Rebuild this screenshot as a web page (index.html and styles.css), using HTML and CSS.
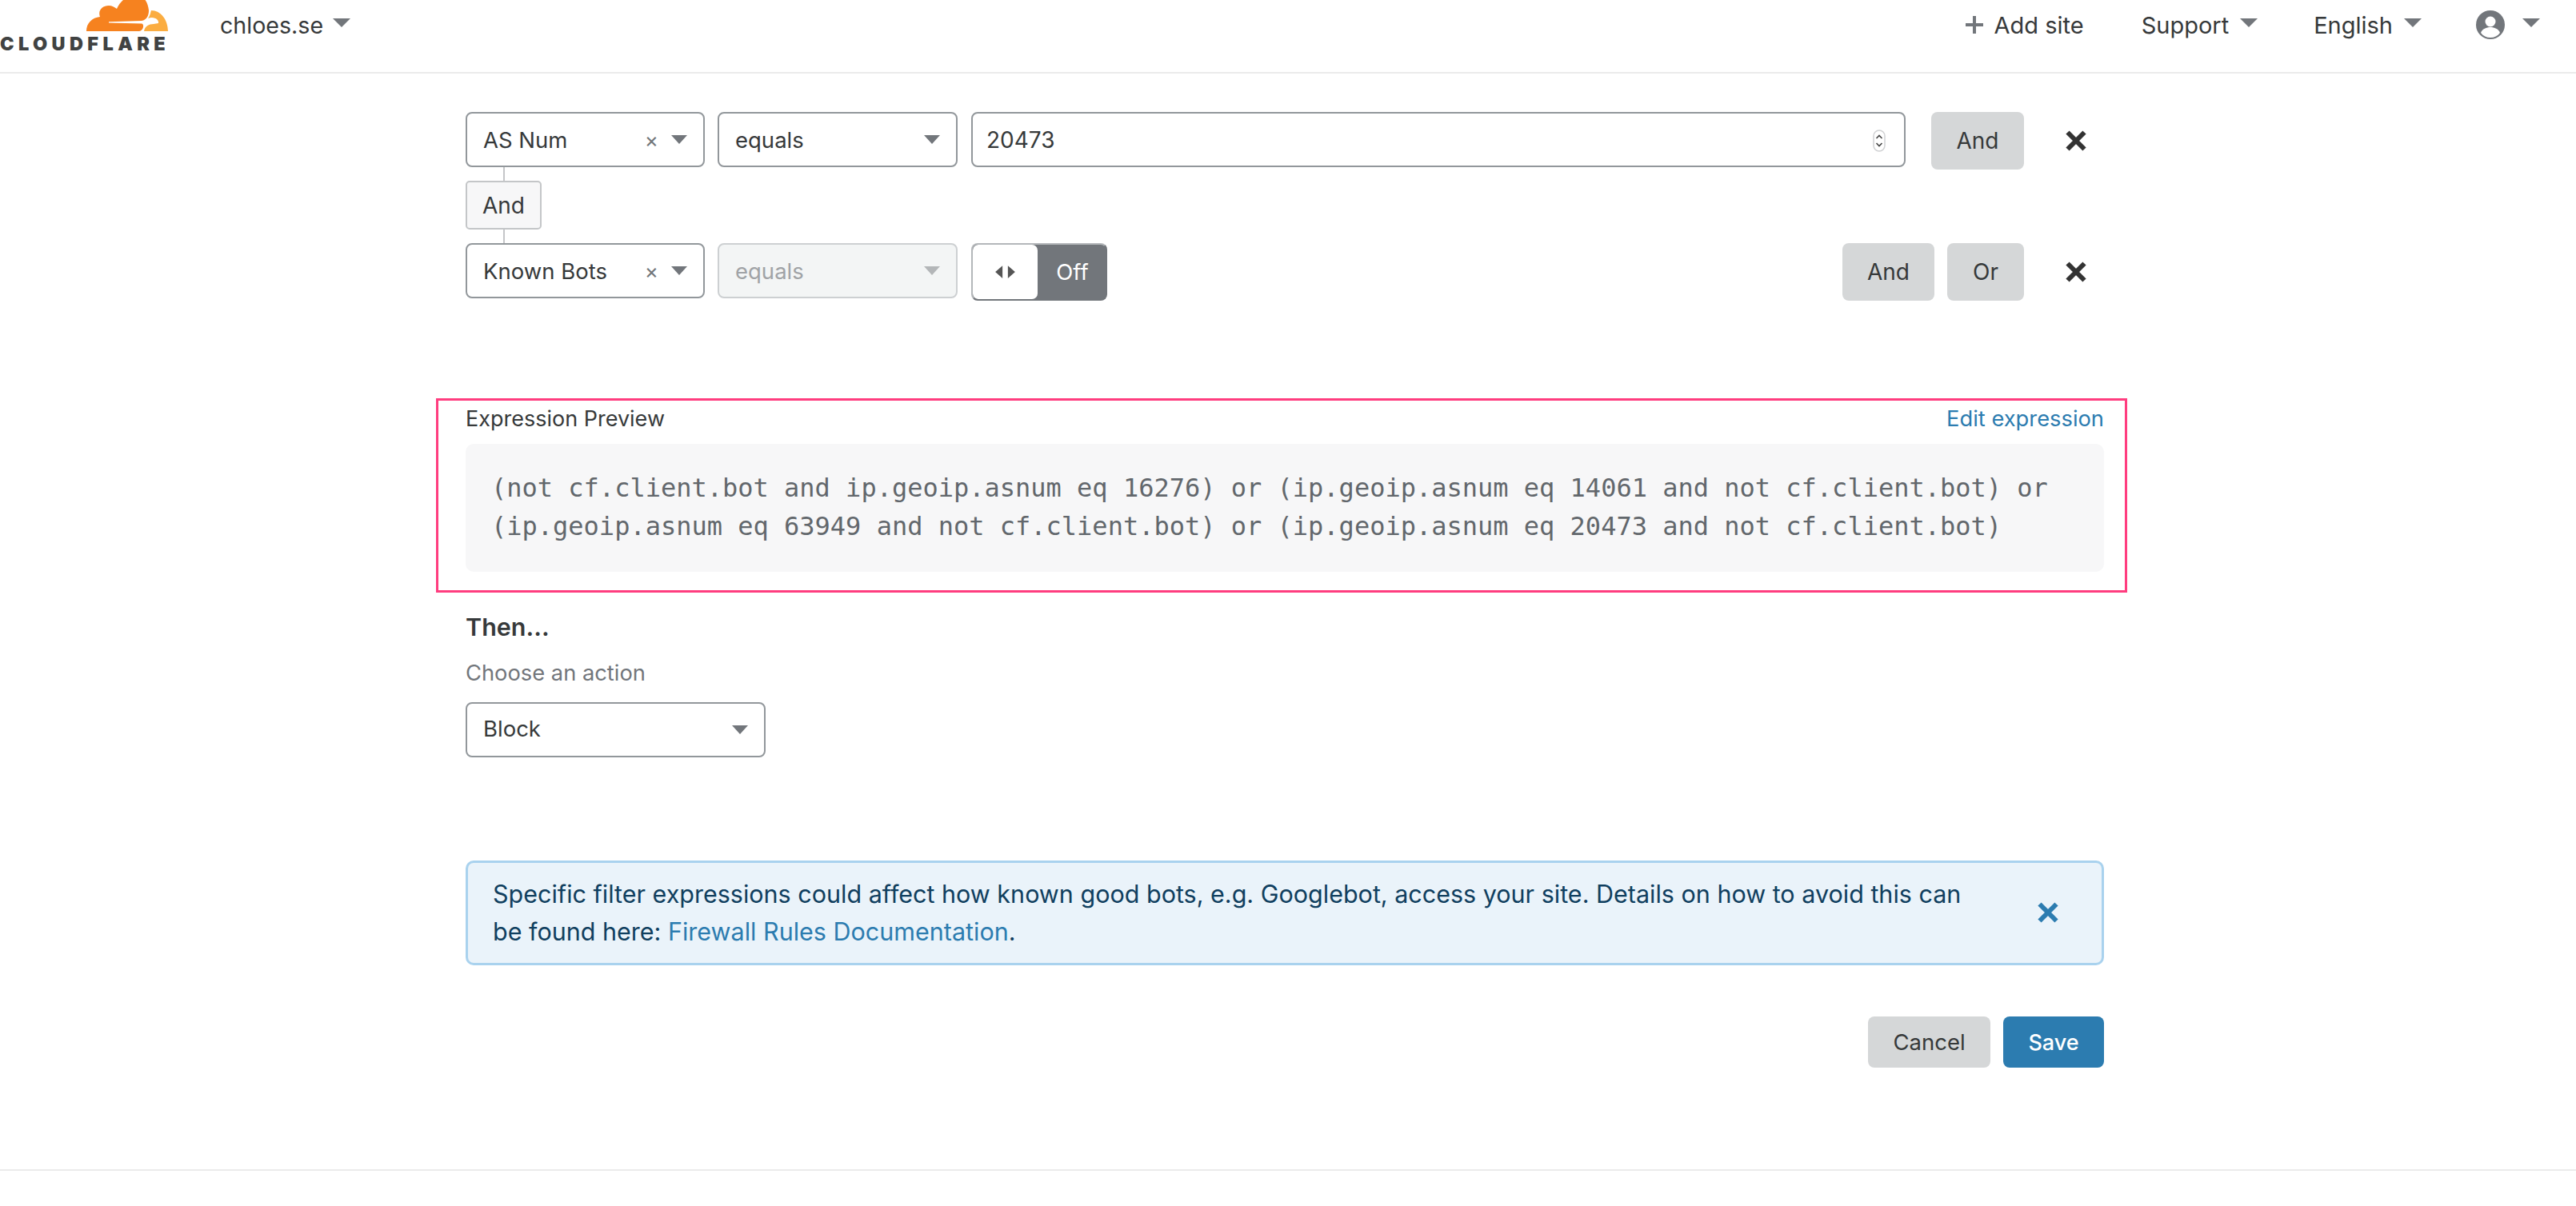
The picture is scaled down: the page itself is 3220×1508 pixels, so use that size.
FILE: index.html
```html
<!DOCTYPE html>
<html lang="en">
<head>
<meta charset="utf-8">
<title>Firewall rule</title>
<link rel="stylesheet" href="styles.css">
</head>
<body>
<header class="topbar">
  <div class="brand">
    <div class="logo">
      <svg class="cloud" viewBox="100 0 115 42" width="115" height="42" aria-hidden="true">
        <path class="cloud-dark" d="M108 39C108 29 115 22 125 21C122 13 128 7 136 7C140 7 143 9 146 11C150 2 158-6 170-6C180-6 185 3 186 13C186 20 183 25 177 26L136 27.2L136 28.6L177 29.4C181 30 179 39 174 39Z"/>
        <path class="cloud-light" d="M189 13C201 13 210 25 210 39L180 39C181 33 186 30 192 30L198 29C199 25 193 20 185 23C188 19 188 16 189 13Z"/>
      </svg>
      <span class="wordmark">CLOUDFLARE</span>
    </div>
    <span class="nav-item site">chloes.se<i class="caret"></i></span>
  </div>
  <nav class="nav-right">
    <span class="nav-item add"><svg class="plus" viewBox="0 0 22 22" width="22" height="22" aria-hidden="true"><path d="M9 0h4v9h9v4h-9v9H9v-9H0V9h9z"/></svg>Add site</span>
    <span class="nav-item">Support<i class="caret"></i></span>
    <span class="nav-item lang">English<i class="caret"></i></span>
    <span class="nav-item user"><svg class="avatar" viewBox="0 0 36 36" width="36" height="36" aria-hidden="true"><circle cx="18" cy="18" r="18" fill="#72767b"/><circle cx="18" cy="14" r="6.5" fill="#fff"/><path d="M6 28c2-5 7-7 12-7s10 2 12 7c-3 4-7 6-12 6s-9-2-12-6z" fill="#fff"/></svg><i class="caret"></i></span>
  </nav>
</header>

<main class="content">
  <div class="rule-row">
    <div class="select field-name"><span class="select-text">AS Num</span><span class="clear">×</span><i class="caret small"></i></div>
    <div class="select field-op"><span class="select-text">equals</span><i class="caret small"></i></div>
    <div class="select field-value"><span class="select-text">20473</span>
      <svg class="spinner" viewBox="0 0 16 28" width="16" height="28" aria-hidden="true"><rect x="1" y="1" width="14" height="26" rx="7" fill="#fff" stroke="#d0d1d3" stroke-width="1.500"/><path d="M4.500 11L8 7.500 11.500 11M4.500 17L8 20.500 11.500 17" fill="none" stroke="#444" stroke-width="1.600"/></svg>
    </div>
    <button class="btn first-btn">And</button>
    <button class="icon-btn" aria-label="Remove"><svg viewBox="0 0 26 26" width="26" height="26" aria-hidden="true"><path d="M2.500 2.500l21 21M23.500 2.500l-21 21" stroke="#333" stroke-width="6"/></svg></button>
  </div>
  <div class="connector"><span class="tag">And</span></div>
  <div class="rule-row">
    <div class="select field-name"><span class="select-text">Known Bots</span><span class="clear">×</span><i class="caret small"></i></div>
    <div class="select field-op disabled"><span class="select-text">equals</span><i class="caret small"></i></div>
    <div class="toggle">
      <span class="toggle-knob"><svg viewBox="0 0 24 14" width="27" height="16" aria-hidden="true"><path d="M9 0v14L1 7zM15 0v14l8-7z" fill="#555"/></svg></span>
      <span class="toggle-label">Off</span>
    </div>
    <div class="row-actions">
      <button class="btn">And</button>
      <button class="btn or">Or</button>
    </div>
    <button class="icon-btn" aria-label="Remove"><svg viewBox="0 0 26 26" width="26" height="26" aria-hidden="true"><path d="M2.500 2.500l21 21M23.500 2.500l-21 21" stroke="#333" stroke-width="6"/></svg></button>
  </div>

  <section class="preview">
    <div class="preview-head"><span>Expression Preview</span><a class="link">Edit expression</a></div>
    <pre class="code">(not cf.client.bot and ip.geoip.asnum eq 16276) or (ip.geoip.asnum eq 14061 and not cf.client.bot) or
(ip.geoip.asnum eq 63949 and not cf.client.bot) or (ip.geoip.asnum eq 20473 and not cf.client.bot)</pre>
  </section>

  <h3 class="then">Then...</h3>
  <p class="hint">Choose an action</p>
  <div class="select action"><span class="select-text">Block</span><i class="caret small"></i></div>

  <div class="alert">
    <p class="alert-text">Specific filter expressions could affect how known good bots, e.g. Googlebot, access your site. Details on how to avoid this can<br>be found here: <a class="link">Firewall Rules Documentation</a>.</p>
    <svg class="alert-close" viewBox="0 0 26 26" width="26" height="26" aria-hidden="true"><path d="M2.500 2.500l21 21M23.500 2.500l-21 21" stroke="#2c7cb0" stroke-width="6"/></svg>
  </div>

  <div class="form-actions">
    <button class="btn cancel">Cancel</button>
    <button class="btn save">Save</button>
  </div>
</main>
<footer class="footer"></footer>
</body>
</html>
```
FILE: styles.css
```css
* { box-sizing: border-box; }
html, body { margin: 0; padding: 0; }
body {
  width: 3220px;
  height: 1508px;
  overflow: hidden;
  background: #fff;
  color: #36393a;
  font-family: Inter, "Liberation Sans", sans-serif;
  font-size: 28px;
}
.topbar {
  height: 92px;
  border-bottom: 2px solid #ebebeb;
  display: flex;
  justify-content: space-between;
  align-items: flex-start;
}
.brand { display: flex; align-items: flex-start; }
.logo { width: 275px; height: 90px; display: flex; flex-direction: column; overflow: hidden; }
.cloud { display: block; margin-left: 100px; flex: none; }
.cloud-dark { fill: #f6821f; }
.cloud-light { fill: #fbad41; }
.wordmark {
  font-size: 23.500px;
  font-weight: 900;
  letter-spacing: 5.400px;
  line-height: 24px;
  color: #404242;
  margin-top: 1px;
}
.nav-item { display: flex; align-items: center; height: 62px; font-size: 29px; white-space: nowrap; }
.site { font-size: 28.600px; }
.site .caret { margin-left: 12px; }
.nav-right { display: flex; align-items: flex-start; margin-right: 45px; }
.nav-item + .nav-item { margin-left: 72px; }
.nav-item + .lang { margin-left: 70px; }
.nav-item + .user { margin-left: 68px; }
.plus { fill: #72767b; margin-right: 14px; }
.caret {
  display: inline-block;
  width: 0;
  height: 0;
  margin-left: 14px;
  margin-bottom: 6px;
  border-left: 11px solid transparent;
  border-right: 11px solid transparent;
  border-top: 11px solid #72767b;
}
.caret.small { border-left-width: 10px; border-right-width: 10px; margin: 0; }
.avatar { margin-right: 8px; }

.content { padding: 48px 590px 0 582px; }
.rule-row { display: flex; align-items: flex-start; height: 72px; padding-right: 22px; }
.select {
  height: 69px;
  border: 2px solid #92979b;
  border-radius: 8px;
  background: #fff;
  display: flex;
  align-items: center;
  padding: 0 20px 0 20px;
  font-size: 27.500px;
  flex: none;
}
.select-text { flex: 1; }
.field-name { width: 299px; }
.field-op { width: 300px; margin-left: 16px; }
.field-value { width: 1168px; margin-left: 17px; padding: 0 20px 0 17px; font-size: 28px; }
.clear { color: #72767b; font-size: 26px; margin-right: 16px; }
.spinner { margin-right: 3px; margin-top: 2px; }
.disabled { background: #f3f5f5; border-color: #cdd0d2; color: #a0a3a6; }
.disabled .caret { border-top-color: #b3b6b8; }
.btn {
  font-family: inherit;
  font-size: 28px;
  color: #36393a;
  background: #d5d7d8;
  border: 0;
  border-radius: 8px;
  height: 72px;
  padding: 0;
  width: 115px;
  flex: none;
}
.first-btn { width: 116px; margin-left: 32px; }
.or { width: 96px; margin-left: 16px; }
.icon-btn {
  border: 0;
  background: none;
  padding: 0;
  margin-left: 52px;
  height: 72px;
  width: 26px;
  flex: none;
  display: flex;
  align-items: center;
}
.connector { position: relative; height: 92px; padding-top: 14px; }
.connector::before {
  content: "";
  position: absolute;
  left: 47px;
  top: -3px;
  bottom: 0;
  width: 2px;
  background: #c4c6c8;
}
.tag {
  position: relative;
  display: flex;
  align-items: center;
  justify-content: center;
  width: 95px;
  height: 61px;
  background: #f7f7f8;
  border: 2px solid #c4c6c8;
  border-radius: 5px;
  font-size: 28px;
}
.toggle {
  width: 170px;
  height: 72px;
  margin-left: 17px;
  flex: none;
  display: flex;
  border-radius: 8px;
  background: #72767b;
  border: 2px solid #72767b;
  border-left-color: #b4b7ba;
  border-top-color: #b4b7ba;
  overflow: hidden;
}
.toggle-knob {
  width: 81px;
  background: #fff;
  border-radius: 7px;
  display: flex;
  align-items: center;
  justify-content: center;
}
.toggle-label { flex: 1; color: #fff; display: flex; align-items: center; justify-content: center; font-size: 27.500px; padding-left: 2px; }
.row-actions { display: flex; margin-left: auto; }

.preview {
  margin: 122px -29px 0 -37px;
  height: 243px;
  border: 3px solid #ff3d7f;
  padding: 4px 26px 0 34px;
}
.preview-head {
  display: flex;
  justify-content: space-between;
  align-items: center;
  height: 36px;
  font-size: 27px;
  margin-bottom: 14px;
}
.preview-head .link { font-size: 27.300px; }
.link { color: #2c7cb0; }
.code {
  margin: 0;
  height: 160px;
  padding: 31px 32px;
  background: #f7f7f8;
  border-radius: 10px;
  font-family: "DejaVu Sans Mono", monospace;
  font-size: 32px;
  line-height: 48px;
  color: #62676c;
}
.then { margin: 25px 0 0; font-size: 30.500px; font-weight: 600; line-height: 36px; }
.hint { margin: 22px 0 0; color: #72767b; font-size: 27.300px; line-height: 36px; }
.action { width: 375px; margin-top: 18px; }
.action .select-text { position: relative; top: -2px; }
.alert {
  margin-top: 129px;
  height: 131px;
  border: 3px solid #a9d2ee;
  border-radius: 10px;
  background: #eaf3fa;
  display: flex;
  align-items: center;
  padding: 0 0 0 31px;
}
.alert-text { margin: 0; flex: 1; font-size: 30.500px; line-height: 47px; color: #103f5f; white-space: nowrap; position: relative; top: -1px; }
.alert-close { margin-right: 54px; position: relative; top: -1px; }
.form-actions { display: flex; justify-content: flex-end; margin-top: 64px; }
.cancel { width: 153px; height: 64px; font-size: 27.500px; }
.save { width: 126px; height: 64px; margin-left: 16px; background: #2c7cb0; color: #fff; font-weight: 500; font-size: 27px; }
.footer { position: absolute; left: 0; right: 0; top: 1462px; height: 2px; background: #ebebeb; }
```
